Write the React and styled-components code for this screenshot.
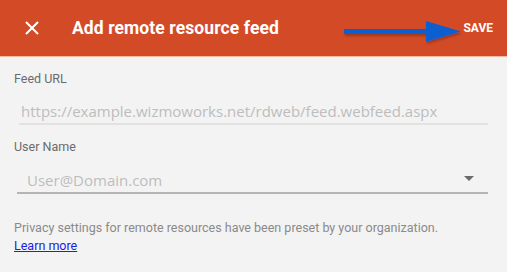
import styled, { createGlobalStyle } from "styled-components";

const Global = createGlobalStyle`
    html, body {
        margin: 0;
        padding: 0;
        background: #f3f3f3;
    }
    #root {
        width: 507px;
        height: 272px;
        overflow: hidden;
    }
`;

const Container = styled.div`
    display: flex;
    flex-direction: column;
    width: 507px;
    height: 272px;
    background-color: #f3f3f3;
    font-family: Roboto, "Liberation Sans", sans-serif;
`;

const Header = styled.div`
    display: flex;
    align-items: center;
    height: 56px;
    background-color: #d34a27;
    border-bottom: 1px solid #f6b7a3;
    color: #fff;
    position: relative;
`;

const Close = styled.button`
    display: flex;
    align-items: center;
    justify-content: center;
    width: 40px;
    height: 40px;
    margin-left: 12px;
    background: transparent;
    border: none;
    padding: 0;
`;

const Title = styled.h1`
    margin: 0 0 0 20px;
    font-size: 17.5px;
    font-weight: 700;
    flex: 1;
    letter-spacing: 0.1px;
`;

const Save = styled.span`
    font-size: 12px;
    font-weight: 700;
    margin-right: 14px;
    margin-top: -1px;
`;

const Arrow = styled.svg`
    position: absolute;
    left: 340px;
    top: 20px;
`;

const Body = styled.div`
    display: flex;
    flex-direction: column;
    padding: 7px 19px 0 14px;
`;

const Label = styled.div`
    font-size: 12.5px;
    color: #6b6b6b;
    margin-top: ${({ $top }) => $top || 0}px;
`;

const Field = styled.div`
    display: flex;
    align-items: center;
    justify-content: space-between;
    margin-top: ${({ $gap }) => $gap}px;
    margin-left: ${({ $indent }) => $indent}px;
    height: 24px;
    padding-left: ${({ $pad }) => $pad}px;
    border-bottom: ${({ $strong }) => ($strong ? "2px solid #b4b4b4" : "2px solid #e2e2e2")};
    font-family: "Open Sans", "Noto Sans", sans-serif;
    font-size: 15px;
    color: #bdbdbd;
`;

const Caret = styled.span`
    width: 0;
    height: 0;
    border-left: 5px solid transparent;
    border-right: 5px solid transparent;
    border-top: 5px solid #6a6a6a;
    margin-right: 14px;
    margin-bottom: 4px;
`;

const Note = styled.p`
    margin: 25px 0 0;
    font-size: 12.5px;
    color: #8a8a8a;
    line-height: 18px;
`;

const Link = styled.a`
    color: #1a22e6;
    text-decoration: underline;
`;

const App = () => {
    return (
        <Container>
            <Global />
            <Header>
                <Close>
                    <svg width="14" height="14" viewBox="0 0 14 14">
                        <path d="M1 1 L13 13 M13 1 L1 13" stroke="#fff" strokeWidth="2" />
                    </svg>
                </Close>
                <Title>Add remote resource feed</Title>
                <Save>SAVE</Save>
                <Arrow width="124" height="28" viewBox="0 0 124 28">
                    <defs>
                        <filter id="sh" x="-10%" y="-30%" width="130%" height="180%">
                            <feDropShadow dx="1" dy="2" stdDeviation="1.2" floodColor="#7a2a15" floodOpacity="0.6" />
                        </filter>
                    </defs>
                    <g filter="url(#sh)">
                        <rect x="4" y="9" width="84" height="5" fill="#0a5fd0" />
                        <polygon points="86,1 121,11.5 86,22" fill="#0a5fd0" />
                    </g>
                </Arrow>
            </Header>
            <Body>
                <Label $top={7}>Feed URL</Label>
                <Field $gap={13} $indent={5} $pad={2}>
                    https://example.wizmoworks.net/rdweb/feed.webfeed.aspx
                </Field>
                <Label $top={14}>User Name</Label>
                <Field $gap={14} $indent={3} $pad={10} $strong>
                    User@Domain.com
                    <Caret />
                </Field>
                <Note>
                    Privacy settings for remote resources have been preset by your organization.
                    <br />
                    <Link href="#">Learn more</Link>
                </Note>
            </Body>
        </Container>
    );
};

export default App;
